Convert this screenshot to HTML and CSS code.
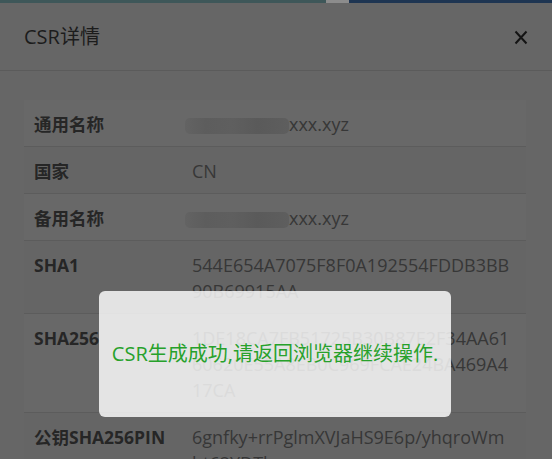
FILE: index.html
```html
<!DOCTYPE html>
<html lang="zh-CN">
<head>
<meta charset="utf-8">
<title>CSR详情</title>
<link rel="stylesheet" href="styles.css">
</head>
<body>
<div class="page-strip">
  <span class="seg seg-a"></span><span class="seg seg-b"></span><span class="seg seg-c"></span>
</div>
<div class="modal">
  <div class="modal-header">
    <div class="modal-title">CSR详情</div>
    <svg class="close" width="14" height="15" viewBox="0 0 14 15" aria-label="关闭">
      <path d="M1.5 1.5 L12.5 13.5 M12.5 1.5 L1.5 13.5" stroke="#141414" stroke-width="2" fill="none" stroke-linecap="butt"/>
    </svg>
  </div>
  <div class="modal-body">
    <div class="table">
      <div class="row odd">
        <div class="label">通用名称</div>
        <div class="value"><span class="blur"></span>xxx.xyz</div>
      </div>
      <div class="row">
        <div class="label">国家</div>
        <div class="value">CN</div>
      </div>
      <div class="row odd">
        <div class="label">备用名称</div>
        <div class="value"><span class="blur"></span>xxx.xyz</div>
      </div>
      <div class="row">
        <div class="label">SHA1</div>
        <div class="value hash">544E654A7075F8F0A192554FDDB3BB90B69915AA</div>
      </div>
      <div class="row odd">
        <div class="label">SHA256</div>
        <div class="value hash">1DE18CA7FB51725B30B87E2F34AA6160620E55A8EB0C969FCAE24BA469A417CA</div>
      </div>
      <div class="row">
        <div class="label">公钥SHA256PIN</div>
        <div class="value hash">6gnfky+rrPglmXVJaHS9E6p/yhqroWmbt62YDTlxxxxxxxx=</div>
      </div>
    </div>
  </div>
</div>
<div class="toast">CSR生成成功,请返回浏览器继续操作.</div>
</body>
</html>
```

FILE: styles.css
```css
html, body {
  margin: 0;
  padding: 0;
}
body {
  width: 552px;
  height: 459px;
  overflow: hidden;
  background: #666666;
  font-family: "Open Sans", "Noto Sans CJK SC", sans-serif;
  position: relative;
}
.page-strip {
  display: flex;
  height: 3px;
}
.seg { display: block; height: 3px; }
.seg-a { width: 326px; background: #3e5759; }
.seg-b { width: 23px; background: #8c8c8c; }
.seg-c { flex: 1; background: #1e3552; }

.modal {
  background: #666666;
}
.modal-header {
  box-sizing: border-box;
  height: 68px;
  padding: 1px 24px 0 24px;
  display: flex;
  align-items: center;
  justify-content: space-between;
  border-bottom: 1px solid #5b5b5b;
}
.modal-title {
  font-size: 20px;
  line-height: 26px;
  color: #1c1c1c;
}
.close {
  display: block;
}
.modal-body {
  padding: 29px 26px 0 24px;
}
.table {
  display: flex;
  flex-direction: column;
}
.row {
  display: flex;
  border-bottom: 1px solid #5c5c5c;
  background: #656565;
}
.row.odd {
  background: #686868;
}
.label {
  width: 138px;
  flex: none;
  padding: 11px 10px 9px 10px;
  font-size: 17.5px;
  line-height: 26px;
  font-weight: 700;
  color: #262626;
  white-space: nowrap;
}
.value {
  flex: 1;
  min-width: 0;
  padding: 11px 12px 9px 10px;
  font-size: 18px;
  line-height: 26px;
  color: #373737;
}
.hash {
  word-break: break-all;
}
.blur {
  display: inline-block;
  vertical-align: middle;
  width: 104px;
  height: 16px;
  margin-left: -7px;
  margin-right: 0;
  border-radius: 5px;
  background: linear-gradient(90deg, #636363 0%, #5d5d5d 20%, #5f5f5f 45%, #5a5a5a 70%, #5e5e5e 100%);
}

.toast {
  position: absolute;
  left: 99px;
  top: 291px;
  width: 352px;
  height: 126px;
  border-radius: 6px;
  background: rgba(255, 255, 255, 0.82);
  display: flex;
  align-items: center;
  justify-content: center;
  font-size: 20px;
  line-height: 26px;
  color: #27a12b;
  white-space: nowrap;
}
```
